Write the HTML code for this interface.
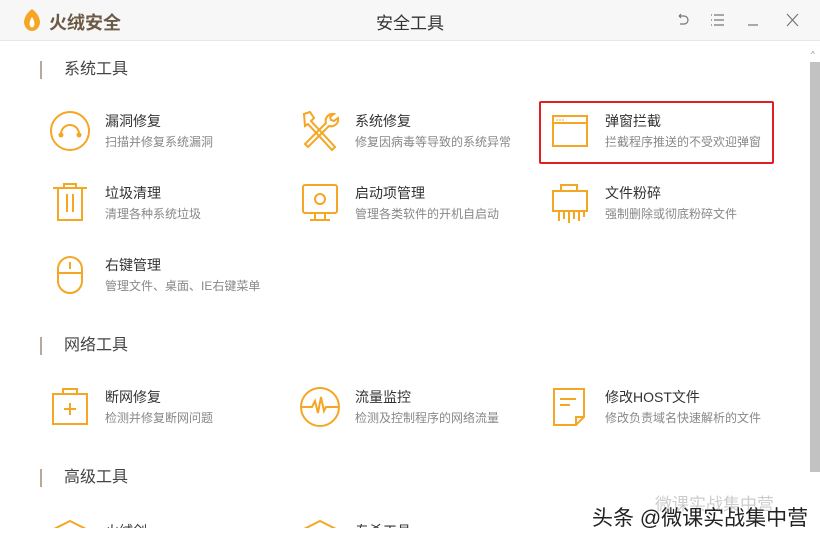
<!DOCTYPE html><html><head><meta charset="utf-8"><style>
body{margin:0;width:820px;height:540px;overflow:hidden;background:#fff;font-family:"Liberation Sans","Noto Sans CJK SC",sans-serif;position:relative}
.top{position:absolute;left:0;top:0;width:820px;height:40px;background:#f7f7f7;border-bottom:1px solid #e8e8e8}
.logo{position:absolute;left:49px;top:9px;font-size:18px;font-weight:bold;color:#6b5a45}
.ttl{position:absolute;left:0;width:820px;top:9px;text-align:center;font-size:17px;color:#333}
.sb{position:absolute;left:810px;top:62px;width:10px;height:410px;background:#c2c2c2}
.sec{position:absolute;left:40px;font-size:16px;color:#444;padding-left:22px;border-left:2px solid #b9a99a;line-height:18px;height:18px}
.it{position:absolute;width:230px;height:50px}
.it svg{position:absolute;left:0;top:0}
.it b{position:absolute;left:55px;top:1px;font-weight:normal;font-size:14px;color:#333;white-space:nowrap}
.it i{position:absolute;left:55px;top:23px;font-style:normal;font-size:12px;color:#888;white-space:nowrap}
.wm{position:absolute;left:592px;top:502px;font-size:21px;color:#222;text-shadow:0 0 2px #fff}
</style></head><body>
<div class="top">
<svg style="position:absolute;left:22px;top:8px" width="20" height="24" viewBox="0 0 20 24"><path d="M10 1C5 5 2 9 2 15c1 5 4 8 8 8s7-3 8-8c0-6-3-10-8-14z" fill="#f5a623"/><path d="M10 9c-2 3-3 6-2 9 1 2 3 2 4 0 1-3 0-6-2-9z" fill="#fff"/></svg>
<div class="logo">火绒安全</div>
<div class="ttl">安全工具</div>
<svg style="position:absolute;left:676px;top:12px" width="130" height="16" viewBox="0 0 130 16" fill="none" stroke="#777" stroke-width="1.2"><path d="M3 4h5a4 4 0 0 1 0 8H4M3 4l2-2M3 4l2 2"/><path d="M38 3h10M38 8h10M38 13h10M35 3h1M35 8h1M35 13h1"/><path d="M72 13h10"/><path d="M111 2l11 12M122 2l-11 12"/></svg>
</div>
<div class="sb"></div>
<div style="position:absolute;left:811px;top:50px;font-size:8px;color:#888">^</div>
<div class="sec" style="top:61px">系统工具</div>
<div class="sec" style="top:337px">网络工具</div>
<div class="sec" style="top:469px">高级工具</div>
<div style="position:absolute;left:539px;top:101px;width:235px;height:63px;border:2px solid #e02020;box-sizing:border-box;border-radius:2px"></div>

<div class="it" style="left:50px;top:110px"><svg width="40" height="42" viewBox="0 0 40 42"><circle cx="20" cy="21" r="19" fill="none" stroke="#f5a623" stroke-width="2"/><path d="M11 24a9 9 0 1 1 18 0" fill="none" stroke="#f5a623" stroke-width="2"/><circle cx="11" cy="25" r="2.5" fill="#f5a623"/><circle cx="29" cy="25" r="2.5" fill="#f5a623"/></svg><b>漏洞修复</b><i>扫描并修复系统漏洞</i></div>
<div class="it" style="left:300px;top:110px"><svg width="40" height="42" viewBox="0 0 40 42"><path d="M4 4l6-2 4 6-3 3 24 26-3 3-24-26-3 2z" fill="none" stroke="#f5a623" stroke-width="2"/><path d="M34 4a7 7 0 0 0-8 9L5 34l3 3 21-21a7 7 0 0 0 9-8l-4 3-3-1-1-3z" fill="none" stroke="#f5a623" stroke-width="2"/></svg><b>系统修复</b><i>修复因病毒等导致的系统异常</i></div>
<div class="it" style="left:550px;top:110px"><svg width="40" height="42" viewBox="0 0 40 42"><rect x="3" y="6" width="34" height="30" fill="none" stroke="#f5a623" stroke-width="2"/><line x1="3" y1="13" x2="37" y2="13" stroke="#f5a623" stroke-width="2"/><circle cx="7" cy="10" r=".8" fill="#f5a623"/><circle cx="10" cy="10" r=".8" fill="#f5a623"/><circle cx="13" cy="10" r=".8" fill="#f5a623"/></svg><b>弹窗拦截</b><i>拦截程序推送的不受欢迎弹窗</i></div>

<div class="it" style="left:50px;top:182px"><svg width="40" height="42" viewBox="0 0 40 42"><path d="M3 6h34M14 6V2h12v4M8 6v32h24V6M17 12v18M23 12v18" fill="none" stroke="#f5a623" stroke-width="2"/></svg><b>垃圾清理</b><i>清理各种系统垃圾</i></div>
<div class="it" style="left:300px;top:182px"><svg width="40" height="42" viewBox="0 0 40 42"><rect x="3" y="3" width="34" height="28" rx="2" fill="none" stroke="#f5a623" stroke-width="2"/><circle cx="20" cy="17" r="5" fill="none" stroke="#f5a623" stroke-width="2"/><path d="M15 31v6M25 31v6M10 38h20" stroke="#f5a623" stroke-width="2"/></svg><b>启动项管理</b><i>管理各类软件的开机自启动</i></div>
<div class="it" style="left:550px;top:182px"><svg width="40" height="42" viewBox="0 0 40 42"><path d="M11 9V3h16v6M3 9h34v20H3zM9 29v10M14 29v8M19 29v12M24 29v8M29 29v10M34 29v6" fill="none" stroke="#f5a623" stroke-width="2"/></svg><b>文件粉碎</b><i>强制删除或彻底粉碎文件</i></div>

<div class="it" style="left:50px;top:254px"><svg width="40" height="42" viewBox="0 0 40 42"><rect x="8" y="3" width="24" height="36" rx="12" fill="none" stroke="#f5a623" stroke-width="2"/><path d="M8 19h24M20 8v7" stroke="#f5a623" stroke-width="2"/></svg><b>右键管理</b><i>管理文件、桌面、IE右键菜单</i></div>

<div class="it" style="left:50px;top:386px"><svg width="40" height="42" viewBox="0 0 40 42"><path d="M13 8V3h14v5M3 8h34v30H3zM20 17v12M14 23h12" fill="none" stroke="#f5a623" stroke-width="2"/></svg><b>断网修复</b><i>检测并修复断网问题</i></div>
<div class="it" style="left:300px;top:386px"><svg width="40" height="42" viewBox="0 0 40 42"><circle cx="20" cy="21" r="19" fill="none" stroke="#f5a623" stroke-width="2"/><path d="M1 21h11l3-6 3 12 3-16 3 14 2-4h13" fill="none" stroke="#f5a623" stroke-width="2"/></svg><b>流量监控</b><i>检测及控制程序的网络流量</i></div>
<div class="it" style="left:550px;top:386px"><svg width="40" height="42" viewBox="0 0 40 42"><path d="M4 3h30v28l-8 8H4zM26 39v-8h8M10 13h16M10 19h10" fill="none" stroke="#f5a623" stroke-width="2"/></svg><b>修改HOST文件</b><i>修改负责域名快速解析的文件</i></div>

<div style="position:absolute;left:0;top:516px;width:810px;height:12px;overflow:hidden">
<svg style="position:absolute;left:52px;top:3px" width="36" height="12"><path d="M2 10L18 2l16 8" fill="none" stroke="#f5a623" stroke-width="2"/></svg>
<div style="position:absolute;left:105px;top:5px;font-size:14px;color:#333">火绒剑</div>
<svg style="position:absolute;left:302px;top:3px" width="36" height="12"><path d="M2 10L18 2l16 8" fill="none" stroke="#f5a623" stroke-width="2"/></svg>
<div style="position:absolute;left:355px;top:5px;font-size:14px;color:#333">专杀工具</div>
</div>
<div style="position:absolute;left:655px;top:490px;font-size:17px;color:#ccc">微课实战集中营</div>
<div class="wm">头条 @微课实战集中营</div>
</body></html>
